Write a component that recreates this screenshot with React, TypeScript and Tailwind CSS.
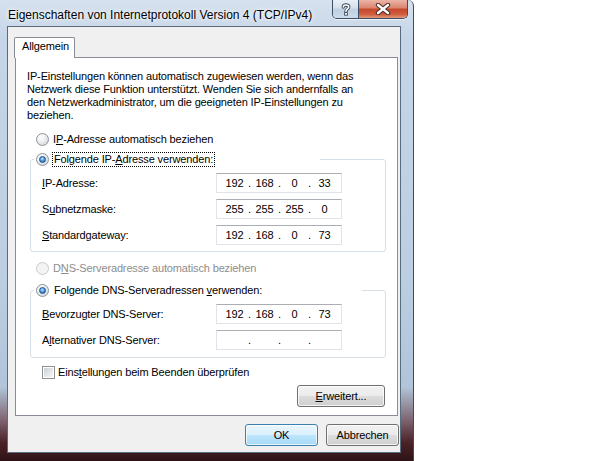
import React from "react";

const ui = "font-['Liberation_Sans',Arial,sans-serif] text-[11px] leading-[13px] tracking-[-0.14px] text-black";

function Radio({ checked = false, disabled = false }: { checked?: boolean; disabled?: boolean }) {
  return (
    <span
      className={`flex h-[13px] w-[13px] shrink-0 items-center justify-center rounded-full border ${
        disabled
          ? "border-[#c8cacc] bg-[#f4f4f4]"
          : "border-[#8b939c] bg-[radial-gradient(circle_at_35%_30%,#ffffff_0%,#eceef0_45%,#c9ced4_100%)]"
      }`}
    >
      {checked && (
        <span className="h-[7px] w-[7px] rounded-full border border-[#1d4f86] bg-[radial-gradient(circle_at_45%_35%,#c4e8ff_0%,#4f9fe2_45%,#1f5aa0_100%)]" />
      )}
    </span>
  );
}

function IpField({ parts = ["", "", "", ""] }: { parts?: string[] }) {
  return (
    <div className="flex h-[20px] w-[126px] items-center border border-[#dfe3ea] border-t-[#abadb3] bg-white pl-[5px]">
      {parts.map((v, i) => (
        <React.Fragment key={i}>
          {i > 0 && <span className="w-[5px] text-center">.</span>}
          <span className="w-[25px] text-center">{v}</span>
        </React.Fragment>
      ))}
    </div>
  );
}

function FieldRow({ label, parts }: { label: React.ReactNode; parts?: string[] }) {
  return (
    <div className="flex h-[20px] items-center">
      <span className="w-[174px] shrink-0">{label}</span>
      <IpField parts={parts} />
    </div>
  );
}

function Button({ children, primary = false, className = "" }: { children: React.ReactNode; primary?: boolean; className?: string }) {
  return (
    <div
      className={`flex h-[22px] items-center justify-center rounded-[3px] border shadow-[inset_0_0_0_1px_rgba(255,255,255,0.75)] ${
        primary
          ? "border-[#3c7fb1] bg-[linear-gradient(to_bottom,#eaf6fd_0%,#d9f0fc_50%,#bee6fd_50%,#a7d9f5_100%)]"
          : "border-[#707070] bg-[linear-gradient(to_bottom,#f2f2f2_0%,#ebebeb_50%,#dddddd_50%,#cfcfcf_100%)]"
      } ${className}`}
    >
      {children}
    </div>
  );
}

export default function App() {
  return (
    <div className="flex h-[461px] w-[614px] bg-white">
      <div className="flex h-full w-[414px] flex-col rounded-tr-[6px] border-r border-[#3b4c5f] bg-[linear-gradient(180deg,#d6e1ee_0%,#c6d6e8_8%,#bccee2_60%,#b1c4d9_84%,#7f6672_91%,#4a2227_96%,#2e1316_100%)]">
        {/* title bar */}
        <div className="flex h-[26px] items-start pl-[8px] pr-[5px]">
          <div className="min-w-0 flex-1 whitespace-nowrap pt-[8px] font-['Liberation_Sans',Arial,sans-serif] text-[12px] leading-[15px] text-black [text-shadow:0_0_6px_#ffffff,0_0_3px_#ffffff]">
            Eigenschaften von Internetprotokoll Version 4 (TCP/IPv4)
          </div>
          <div className="flex h-[19px] overflow-hidden rounded-b-[5px] border border-t-0 border-[#3d4f63] shadow-[0_1px_0_rgba(255,255,255,0.6)]">
            <div className="flex w-[26px] items-center justify-center border-r border-[#3d4f63] bg-[linear-gradient(to_bottom,#e9eff6_0%,#d5e0ec_45%,#bfcfe1_50%,#cddbea_100%)]">
              <svg width="10" height="13" viewBox="0 0 10 13">
                <path d="M2.3 4 C2.3 1.4 7.7 1.4 7.7 4 C7.7 6 5 6 5 8.2" fill="none" stroke="#3c4a5a" strokeWidth="3.4" strokeLinecap="round" />
                <path d="M2.3 4 C2.3 1.4 7.7 1.4 7.7 4 C7.7 6 5 6 5 8.2" fill="none" stroke="#ffffff" strokeWidth="1.6" strokeLinecap="round" />
                <rect x="3.6" y="9.6" width="2.8" height="2.6" fill="#ffffff" stroke="#3c4a5a" strokeWidth="0.9" />
              </svg>
            </div>
            <div className="flex w-[48px] items-center justify-center bg-[linear-gradient(to_bottom,#ebb5a7_0%,#da836d_45%,#c5472b_50%,#cf5e3e_80%,#e29a7d_100%)]">
              <svg width="18" height="12" viewBox="0 0 18 12">
                <path d="M4 2 L14 10 M14 2 L4 10" stroke="#4a2a22" strokeWidth="4.4" strokeLinecap="round" />
                <path d="M4 2 L14 10 M14 2 L4 10" stroke="#ffffff" strokeWidth="2.4" strokeLinecap="round" />
              </svg>
            </div>
          </div>
        </div>

        {/* client area */}
        <div className={`mb-[8px] ml-[7px] mr-[12px] flex flex-1 flex-col border border-[#5a6b7d] bg-[#f0f0f0] pt-[10px] ${ui}`}>
          <div className="pl-[6px]">
            <div className="relative z-10 -mb-px h-[21px] w-[61px] rounded-t-[2px] border border-b-0 border-[#898c95] bg-white pl-[7px] pt-[2px]">
              Allgemein
            </div>
          </div>

          <div className="ml-[7px] mr-[2px] border border-[#898c95] bg-white pb-[8px] pt-[12px]">
            <p className="whitespace-nowrap pl-[11px]">
              IP-Einstellungen können automatisch zugewiesen werden, wenn das
              <br />
              Netzwerk diese Funktion unterstützt. Wenden Sie sich andernfalls an
              <br />
              den Netzwerkadministrator, um die geeigneten IP-Einstellungen zu
              <br />
              beziehen.
            </p>

            <div className="ml-[20px] mt-[11px] flex h-[13px] items-center gap-[4px]">
              <Radio />
              <span>
                I<span className="underline">P</span>-Adresse automatisch beziehen
              </span>
            </div>

            <fieldset className="ml-[14px] mr-[11px] mt-[6px] rounded-[3px] border border-[#d5dfe5]">
              <legend className="ml-[3px] w-[286px] px-[2px]">
                <div className="flex h-[15px] items-center gap-[3px]">
                  <Radio checked />
                  <span className="border border-dotted border-black px-[1px]">
                    Folgende IP-<span className="underline">A</span>dresse verwenden:
                  </span>
                </div>
              </legend>
              <div className="flex flex-col gap-[6px] px-[11px] pb-[6px] pt-[6px]">
                <FieldRow label={<><span className="underline">I</span>P-Adresse:</>} parts={["192", "168", "0", "33"]} />
                <FieldRow label={<>S<span className="underline">u</span>bnetzmaske:</>} parts={["255", "255", "255", "0"]} />
                <FieldRow label={<><span className="underline">S</span>tandardgateway:</>} parts={["192", "168", "0", "73"]} />
              </div>
            </fieldset>

            <div className="ml-[20px] mt-[10px] flex h-[13px] items-center gap-[4px] text-[#8d8d8d]">
              <Radio disabled />
              <span>
                D<span className="underline">N</span>S-Serveradresse automatisch beziehen
              </span>
            </div>

            <fieldset className="ml-[14px] mr-[11px] mt-[8px] rounded-[3px] border border-[#d5dfe5]">
              <legend className="ml-[3px] w-[328px] px-[2px]">
                <div className="flex h-[15px] items-center gap-[3px]">
                  <Radio checked />
                  <span className="border border-transparent px-[1px]">
                    Folgende DNS-Serveradressen <span className="underline">v</span>erwenden:
                  </span>
                </div>
              </legend>
              <div className="flex flex-col gap-[6px] px-[11px] pb-[7px] pt-[6px]">
                <FieldRow label={<><span className="underline">B</span>evorzugter DNS-Server:</>} parts={["192", "168", "0", "73"]} />
                <FieldRow label={<>A<span className="underline">l</span>ternativer DNS-Server:</>} />
              </div>
            </fieldset>

            <div className="ml-[26px] mt-[8px] flex h-[13px] items-center gap-[3px]">
              <span className="flex h-[13px] w-[13px] shrink-0 items-center justify-center border border-[#8e8f8f] bg-white">
                <span className="h-[9px] w-[9px] bg-[linear-gradient(135deg,#cbcfd5_0%,#e6e8eb_60%,#f6f6f6_100%)]" />
              </span>
              <span>
                Eins<span className="underline">t</span>ellungen beim Beenden überprüfen
              </span>
            </div>

            <div className="mr-[12px] mt-[6px] flex justify-end">
              <Button className="w-[88px]">
                <span>
                  <span className="underline">E</span>rweitert...
                </span>
              </Button>
            </div>
          </div>

          <div className="mt-[8px] flex justify-end gap-[8px] pr-[1px]">
            <Button primary className="w-[73px]">
              OK
            </Button>
            <Button className="w-[73px]">Abbrechen</Button>
          </div>
        </div>
      </div>
    </div>
  );
}
